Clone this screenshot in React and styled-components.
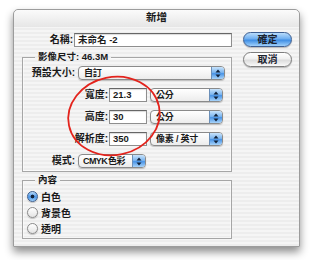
import React from "react";
import styled, { createGlobalStyle } from "styled-components";

const GlobalStyle = createGlobalStyle`
  html, body {
    margin: 0;
    padding: 0;
    background: #ffffff;
  }
  body {
    width: 310px;
    height: 260px;
    overflow: hidden;
    position: relative;
    font-family: "Liberation Sans", "Noto Sans CJK TC", sans-serif;
  }
`;

const stripes = "repeating-linear-gradient(#ededed 0 2px, #f5f5f5 2px 4px) fixed";

function Stepper() {
  return (
    <StepperBox>
      <svg width="6" height="9" viewBox="0 0 6 9">
        <path d="M3 0.5 L5.5 3.5 L0.5 3.5 Z" fill="#10223a" />
        <path d="M3 8.5 L5.5 5.5 L0.5 5.5 Z" fill="#10223a" />
      </svg>
    </StepperBox>
  );
}

function Popup({ width, tight, children }) {
  return (
    <PopupBox $width={width}>
      <PopupText $tight={tight}>{children}</PopupText>
      <Stepper />
    </PopupBox>
  );
}

function Radio({ checked, children }) {
  return (
    <RadioRow>
      <RadioDot $checked={checked} />
      <span>{children}</span>
    </RadioRow>
  );
}

function App() {
  return (
    <>
      <GlobalStyle />
      <Window>
        <TitleBar>新增</TitleBar>
        <Body>
          <MainColumn>
            <NameRow>
              <Label $width={51}>名稱:</Label>
              <TextField $width={158}>未命名 -2</TextField>
            </NameRow>
            <Group>
              <Legend>影像尺寸: 46.3M</Legend>
              <Rows>
                <Row>
                  <Label $width={52}>預設大小:</Label>
                  <Popup width={148}>自訂</Popup>
                </Row>
                <Row>
                  <Label $width={85}>寬度:</Label>
                  <TextField $width={38}>21.3</TextField>
                  <Popup width={73}>公分</Popup>
                </Row>
                <Row>
                  <Label $width={85}>高度:</Label>
                  <TextField $width={38}>30</TextField>
                  <Popup width={73}>公分</Popup>
                </Row>
                <Row>
                  <Label $width={85}>解析度:</Label>
                  <TextField $width={38}>350</TextField>
                  <Popup width={73}>像素 / 英寸</Popup>
                </Row>
                <Row>
                  <Label $width={52}>模式:</Label>
                  <Popup width={68} tight>
                    CMYK 色彩
                  </Popup>
                </Row>
              </Rows>
            </Group>
            <Group $second>
              <Legend>內容</Legend>
              <RadioList>
                <Radio checked>白色</Radio>
                <Radio>背景色</Radio>
                <Radio>透明</Radio>
              </RadioList>
            </Group>
          </MainColumn>
          <ButtonColumn>
            <Button $primary>確定</Button>
            <Button>取消</Button>
          </ButtonColumn>
        </Body>
      </Window>
      <Circle width="310" height="260" viewBox="0 0 310 260">
        <ellipse
          cx="114"
          cy="116"
          rx="46"
          ry="39"
          transform="rotate(-12 114 116)"
          fill="none"
          stroke="#e3231c"
          strokeWidth="1.8"
        />
      </Circle>
    </>
  );
}

const Window = styled.div`
  margin: 9px 0 0 13px;
  width: 285px;
  height: 236px;
  border: 1px solid #9c9c9c;
  border-radius: 5px 5px 0 0;
  background: ${stripes};
  box-shadow: 0 5px 8px rgba(0, 0, 0, 0.45);
  display: flex;
  flex-direction: column;
  font-family: "Liberation Sans", "Noto Sans CJK TC", sans-serif;
  font-weight: 700;
  color: #1a1a1a;
`;

const TitleBar = styled.div`
  height: 17px;
  line-height: 14px;
  text-align: center;
  font-size: 10.5px;
  font-weight: 700;
  border-radius: 5px 5px 0 0;
  background: linear-gradient(#fbfbfb, #e6e6e6);
`;

const Body = styled.div`
  display: flex;
  align-items: flex-start;
  padding: 5px 0 0 8px;
`;

const MainColumn = styled.div`
  width: 210px;
  display: flex;
  flex-direction: column;
`;

const ButtonColumn = styled.div`
  display: flex;
  flex-direction: column;
  gap: 5px;
  margin-left: 11px;
`;

const Button = styled.div`
  width: 49px;
  height: 15px;
  box-sizing: border-box;
  border-radius: 8px;
  border: 1px solid ${(p) => (p.$primary ? "#3e5f92" : "#7d7d7d")};
  background: ${(p) =>
    p.$primary
      ? "linear-gradient(#b9dcfb 0%, #6eaef0 45%, #3f8ee4 55%, #9fd0fb 100%)"
      : "linear-gradient(#ffffff 0%, #f0f0f0 45%, #dcdcdc 55%, #fafafa 100%)"};
  box-shadow: 0 1px 1px rgba(0, 0, 0, 0.25);
  font-size: 10px;
  line-height: 13px;
  text-align: center;
  color: #1c2330;
`;

const NameRow = styled.div`
  display: flex;
  align-items: center;
  height: 15px;
`;

const Label = styled.div`
  width: ${(p) => p.$width}px;
  flex-shrink: 0;
  text-align: right;
  font-size: 10px;
  line-height: 14px;
  white-space: nowrap;
`;

const TextField = styled.div`
  width: ${(p) => p.$width}px;
  height: 14px;
  box-sizing: border-box;
  margin-left: 1px;
  border: 1px solid #8e8e8e;
  border-top-color: #666666;
  background: #ffffff;
  box-shadow: inset 0 1px 1px rgba(0, 0, 0, 0.15);
  font-size: 9.5px;
  line-height: 12px;
  padding-left: 3px;
  white-space: nowrap;
`;

const Group = styled.div`
  position: relative;
  margin-top: ${(p) => (p.$second ? "8px" : "10px")};
  padding: 8px 6px 3px 0;
  border: 1px solid #a6a6a6;
  box-shadow: inset 0 0 0 1px rgba(255, 255, 255, 0.5);
`;

const Legend = styled.div`
  position: absolute;
  top: -7px;
  left: 12px;
  padding: 0 3px;
  font-size: 9.5px;
  line-height: 12px;
  background: ${stripes};
`;

const Rows = styled.div`
  display: flex;
  flex-direction: column;
  gap: 8px;
`;

const Row = styled.div`
  display: flex;
  align-items: center;
  height: 14px;
`;

const PopupBox = styled.div`
  width: ${(p) => p.$width}px;
  height: 14px;
  box-sizing: border-box;
  margin-left: 3px;
  display: flex;
  border: 1px solid #8a8a8a;
  border-radius: 4px;
  background: linear-gradient(#ffffff, #ececec);
  box-shadow: 0 1px 1px rgba(0, 0, 0, 0.2);
  overflow: hidden;
`;

const PopupText = styled.div`
  flex: 1;
  min-width: 0;
  padding-left: ${(p) => (p.$tight ? "4px" : "5px")};
  font-size: 9px;
  letter-spacing: ${(p) => (p.$tight ? "-0.6px" : "-0.2px")};
  word-spacing: ${(p) => (p.$tight ? "-1px" : "0")};
  line-height: 12px;
  white-space: nowrap;
`;

const StepperBox = styled.div`
  width: 12px;
  flex-shrink: 0;
  display: flex;
  align-items: center;
  justify-content: center;
  border-left: 1px solid #6b8fb8;
  background: linear-gradient(#c8e3fb 0%, #7db6ef 45%, #4a94e6 55%, #a8d4fa 100%);
`;

const RadioList = styled.div`
  display: flex;
  flex-direction: column;
  gap: 2px;
  padding-left: 4px;
`;

const RadioRow = styled.div`
  display: flex;
  align-items: center;
  gap: 3px;
  height: 14px;
  font-size: 10px;
`;

const RadioDot = styled.div`
  width: 11px;
  height: 11px;
  box-sizing: border-box;
  border-radius: 50%;
  border: 1px solid ${(p) => (p.$checked ? "#3d5f8f" : "#8a8a8a")};
  background: ${(p) =>
    p.$checked
      ? "radial-gradient(circle at 50% 50%, #13243d 0 1.6px, transparent 2.2px), linear-gradient(#b9dcfb, #4a94e6 55%, #9fd0fb)"
      : "linear-gradient(#ffffff, #e4e4e4)"};
  box-shadow: 0 1px 1px rgba(0, 0, 0, 0.2);
`;

const Circle = styled.svg`
  position: absolute;
  left: 0;
  top: 0;
  pointer-events: none;
`;

export default App;
